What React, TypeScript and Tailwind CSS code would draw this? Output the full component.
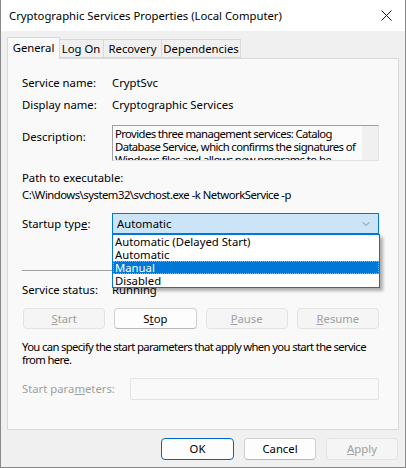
import { ChevronDown } from "lucide-react";

const font = { fontFamily: '"Noto Sans", "Segoe UI", sans-serif' };

function Tab({ label, width, active = false }: { label: string; width: string; active?: boolean }) {
  if (active) {
    return (
      <div className={`${width} h-[22px] -mb-px z-10 border border-b-0 border-[#d9d9d9] bg-[#f9f9f9] flex items-start justify-center pt-[2px] text-[11.3px] leading-4`}>
        {label}
      </div>
    );
  }
  return (
    <div className={`${width} h-[19px] -ml-px border border-[#d9d9d9] bg-[#f0f0f0] flex items-center justify-center text-[11.3px] leading-4 whitespace-nowrap`}>
      {label}
    </div>
  );
}

function Btn({ children, disabled = false, primary = false, className = "" }: { children: React.ReactNode; disabled?: boolean; primary?: boolean; className?: string }) {
  let tone = "border-[#d0d0d0] border-b-[#b8b8b8] bg-[#fdfdfd] text-black";
  if (disabled) tone = "border-[#e3e3e3] bg-[#f5f5f5] text-[#a0a0a0]";
  if (primary) tone = "border-[#0067c0] bg-[#fdfdfd] text-black";
  return (
    <div className={`h-[21px] rounded-[4px] border flex items-center justify-center text-[11.3px] leading-4 ${tone} ${className}`}>
      {children}
    </div>
  );
}

const options = ["Automatic (Delayed Start)", "Automatic", "Manual", "Disabled"];

export default function App() {
  return (
    <div style={font} className="w-[406px] h-[468px] flex flex-col bg-[#f0f0f0] border-x border-b border-[#8a8a8a] text-black overflow-hidden">
      {/* title bar */}
      <div className="h-[31px] bg-white flex items-center justify-between pl-[8px] pr-[12px] shrink-0">
        <span className="text-[11.3px] leading-4">Cryptographic Services Properties (Local Computer)</span>
        <svg width="11" height="11" viewBox="0 0 11 11" className="mr-[1px]">
          <path d="M0.5 0.5L10.5 10.5M10.5 0.5L0.5 10.5" stroke="#1a1a1a" strokeWidth="1" />
        </svg>
      </div>

      <div className="flex flex-col px-[6px] pt-[6px]">
        {/* tabs */}
        <div className="flex items-end h-[21px]">
          <Tab label="General" width="w-[53px]" active />
          <div className="flex items-end -ml-px">
            <Tab label="Log On" width="w-[46px]" />
            <Tab label="Recovery" width="w-[59px]" />
            <Tab label="Dependencies" width="w-[80px]" />
          </div>
        </div>

        {/* panel */}
        <div className="relative h-[372px] border border-[#d9d9d9] bg-[#f9f9f9] pl-[14px] pt-[16px] text-[11.3px] leading-4">
          <div className="flex">
            <span className="w-[90px]">Service name:</span>
            <span>CryptSvc</span>
          </div>
          <div className="flex mt-[6px]">
            <span className="w-[90px]">Display name:</span>
            <span>Cryptographic Services</span>
          </div>
          <div className="flex mt-[12px]">
            <span className="w-[90px] pt-[4px]">Description:</span>
            <div className="w-[267px] h-[36px] flex border-t border-l border-[#a0a0a0] border-r border-b border-r-[#e3e3e3] border-b-[#e3e3e3] bg-[#fbfbfb] overflow-hidden">
              <div className="flex-1 pl-[2px] pt-[1px] leading-[13px] whitespace-nowrap overflow-hidden tracking-[-0.6px]">
                Provides three management services: Catalog
                <br />
                Database Service, which confirms the signatures of
                <br />
                Windows files and allows new programs to be
              </div>
              <div className="w-[16px] shrink-0 bg-[#f0f0f0]" />
            </div>
          </div>
          <div className="mt-[9px]">Path to executable:</div>
          <div className="mt-[1px] tracking-[-0.5px] whitespace-nowrap">C:\Windows\system32\svchost.exe -k NetworkService -p</div>

          <div className="flex items-center mt-[10px]">
            <span className="w-[90px]">
              Startup typ<span className="underline">e</span>:
            </span>
            <div className="w-[267px] h-[21px] border border-[#0078d7] bg-[#cce4f7] flex items-center justify-between pl-[4px] pr-[6px]">
              <span>Automatic</span>
              <ChevronDown size={12} strokeWidth={1.25} color="#555" />
            </div>
          </div>

          <div className="mt-[36px] w-[357px] h-px bg-[#a0a0a0]" />

          <div className="flex mt-[11px]">
            <span className="w-[90px]">Service status:</span>
            <span>Running</span>
          </div>

          <div className="grid grid-cols-4 gap-[9px] w-[356px] mt-[10px] ml-px">
            <Btn disabled>
              <span className="underline">S</span>tart
            </Btn>
            <Btn>
              S<span className="underline">t</span>op
            </Btn>
            <Btn disabled>
              <span className="underline">P</span>ause
            </Btn>
            <Btn disabled>
              <span className="underline">R</span>esume
            </Btn>
          </div>

          <div className="mt-[11px] leading-[13px] whitespace-nowrap tracking-[-0.65px]">
            You can specify the start parameters that apply when you start the service
            <br />
            from here.
          </div>

          <div className="flex items-center mt-[12px]">
            <span className="w-[108px] text-[#a0a0a0]">
              Start para<span className="underline">m</span>eters:
            </span>
            <div className="w-[249px] h-[22px] border border-[#e3e3e3] rounded-[2px] bg-[#f9f9f9]" />
          </div>

          {/* open dropdown list */}
          <div className="absolute left-[104px] top-[175px] w-[268px] border border-[#0078d7] bg-white shadow-[3px_3px_3px_rgba(0,0,0,0.3)] leading-[13px]">
            {options.map((o) => (
              <div
                key={o}
                className={
                  o === "Manual"
                    ? "h-[13px] pl-[2px] bg-[#0078d7] text-white outline-1 outline-dotted outline-[#f5a142] -outline-offset-1"
                    : "h-[13px] pl-[2px]"
                }
              >
                {o}
              </div>
            ))}
          </div>
        </div>

        {/* dialog buttons */}
        <div className="flex justify-end gap-[10px] mt-[8px] pr-[1px]">
          <Btn primary className="w-[73px] h-[22px]">OK</Btn>
          <Btn className="w-[72px] h-[22px]">Cancel</Btn>
          <Btn disabled className="w-[72px] h-[22px]">
            <span className="underline">A</span>pply
          </Btn>
        </div>
      </div>
    </div>
  );
}
